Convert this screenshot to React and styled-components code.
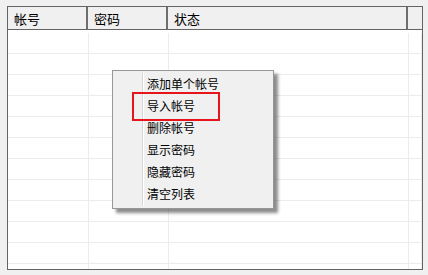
import React from "react";
import styled, { createGlobalStyle } from "styled-components";

const Global = createGlobalStyle`
  html, body { margin: 0; padding: 0; background: #f0f0f0; }
  body { font-family: "Noto Sans CJK SC", "Microsoft YaHei", sans-serif; font-size: 12px; color: #000; }
`;

const Page = styled.div`
  width: 428px;
  height: 275px;
  padding: 6px 0 0 7px;
  box-sizing: border-box;
`;

const Frame = styled.div`
  position: relative;
  width: 416px;
  height: 264px;
  box-sizing: border-box;
  border: 1px solid #646464;
  background: #fff;
  overflow: hidden;
`;

const Header = styled.div`
  display: grid;
  grid-template-columns: 80px 80px 240px 1fr;
  height: 23px;
  background: #f0f0f0;
  border-bottom: 1px solid #646464;
  box-sizing: border-box;
`;

const HeadCell = styled.div`
  display: flex;
  align-items: center;
  padding-left: 6px;
  box-sizing: border-box;
  font-size: 13px;
  border-right: ${(p) => (p.$last ? "none" : "2px solid #6e6e6e")};
  line-height: 1;
`;

const Rows = styled.div`
  padding-top: 3px;
`;

const Row = styled.div`
  display: grid;
  grid-template-columns: 81px 80px 240px 1fr;
  height: 21px;
  box-sizing: border-box;
  border-bottom: 1px solid #ececec;
`;

const Cell = styled.div`
  border-right: 1px solid #ececec;
`;

const Menu = styled.div`
  position: absolute;
  left: 104px;
  top: 63px;
  width: 162px;
  height: 139px;
  box-sizing: border-box;
  background: #f0f0f0;
  border: 1px solid #979797;
  padding: 2px 0;
  box-shadow: 4px 4px 3px rgba(0, 0, 0, 0.45);
  &::before {
    content: "";
    position: absolute;
    left: 29px;
    top: 2px;
    bottom: 2px;
    width: 1px;
    background: #d7d7d7;
    box-shadow: 1px 0 0 #fff;
  }
`;

const Item = styled.div`
  height: 22px;
  display: flex;
  align-items: center;
  padding-left: 34px;
  line-height: 1;
`;

const Highlight = styled.div`
  position: absolute;
  left: 19px;
  top: 21px;
  width: 88px;
  height: 29px;
  box-sizing: border-box;
  border: 2px solid #e8141c;
  pointer-events: none;
`;

const items = ["添加单个帐号", "导入帐号", "删除帐号", "显示密码", "隐藏密码", "清空列表"];

export default function App() {
  return (
    <Page>
      <Global />
      <Frame>
        <Header>
          <HeadCell>帐号</HeadCell>
          <HeadCell>密码</HeadCell>
          <HeadCell>状态</HeadCell>
          <HeadCell $last />
        </Header>
        <Rows>
          {Array.from({ length: 12 }).map((_, i) => (
            <Row key={i}>
              <Cell />
              <Cell />
              <Cell />
              <Cell />
            </Row>
          ))}
        </Rows>
        <Menu>
          {items.map((t) => (
            <Item key={t}>{t}</Item>
          ))}
          <Highlight />
        </Menu>
      </Frame>
    </Page>
  );
}
